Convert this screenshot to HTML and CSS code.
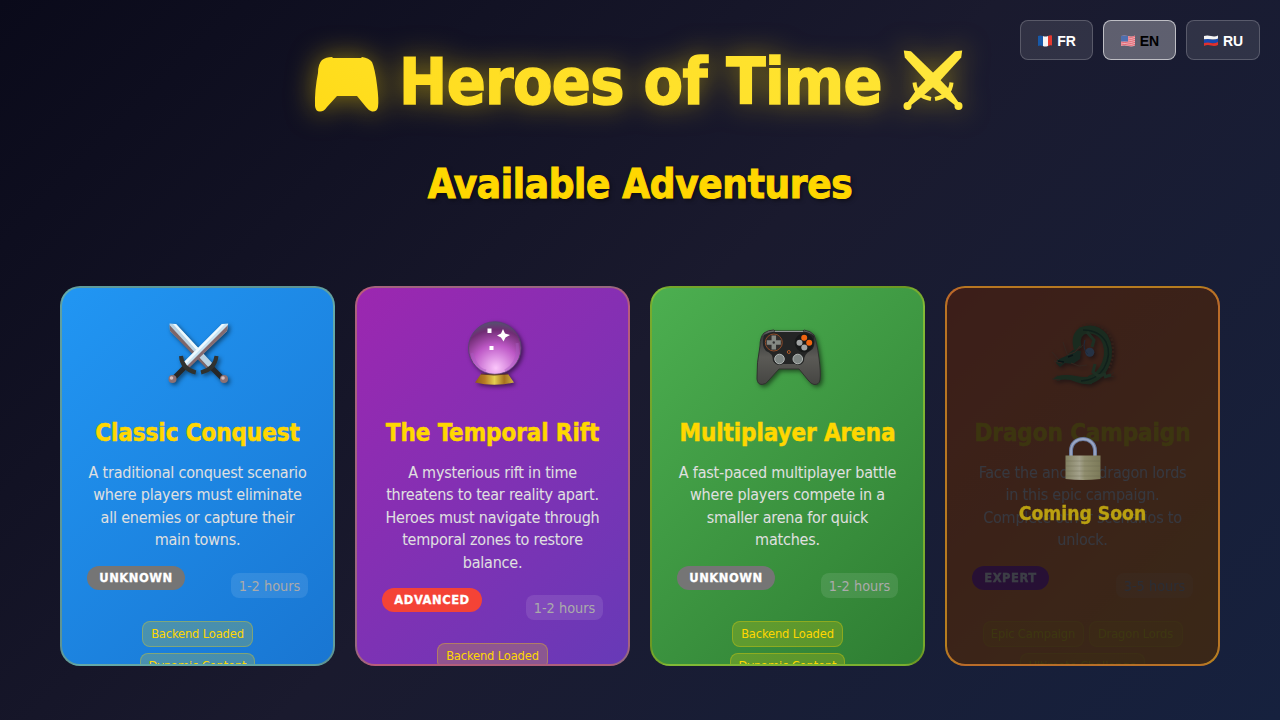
FILE: index.html
```html
<!DOCTYPE html>
<html lang="en">
<head>
<meta charset="utf-8">
<title>Heroes of Time</title>
<link rel="stylesheet" href="styles.css">
</head>
<body>
<svg class="defs" width="0" height="0">
  <defs>
    <linearGradient id="gold" x1="0" y1="1" x2="1" y2="0"><stop offset="0" stop-color="#ffdb18"/><stop offset="1" stop-color="#ffdf22"/></linearGradient>
    <linearGradient id="pad" x1="0" y1="0" x2="0" y2="1"><stop offset="0" stop-color="#77797a"/><stop offset=".12" stop-color="#3a3b3b"/><stop offset=".5" stop-color="#5b5a56"/><stop offset="1" stop-color="#454542"/></linearGradient>
    <radialGradient id="ball" cx=".52" cy=".88" r=".88"><stop offset="0" stop-color="#fbc6fb"/><stop offset=".25" stop-color="#dc90e2"/><stop offset=".5" stop-color="#bd58c6"/><stop offset=".83" stop-color="#702c74"/><stop offset="1" stop-color="#54526f"/></radialGradient>
    <linearGradient id="brass" x1="0" y1="0" x2="1" y2="0"><stop offset="0" stop-color="#8c5a17"/><stop offset=".25" stop-color="#b77a25"/><stop offset=".5" stop-color="#e5cf50"/><stop offset=".75" stop-color="#a6701f"/><stop offset="1" stop-color="#d1b544"/></linearGradient>
    <linearGradient id="lockbody" x1="0" y1="0" x2="1" y2="0"><stop offset="0" stop-color="#b0aa74"/><stop offset=".4" stop-color="#e0dab0"/><stop offset=".55" stop-color="#c2bc84"/><stop offset="1" stop-color="#a8a268"/></linearGradient>
    <path id="padshape" d="M12 15Q16 12 22 12L23 13H51L52 12Q59 13 62 17Q65 24 67 40Q69 55 68 62Q67 67 62 66.500Q59 66 56 62L47 51H27L17 62Q14 66.500 10 66.500Q5.500 66.500 5 61Q4.500 45 8 28Q8 19 12 15Z"/>
  </defs>
</svg>

<nav class="languages">
  <button class="lang"><svg class="flag" viewBox="0 0 16 12"><path fill="#1859a8" d="M1 1Q3 0 6 1V11Q3 10 1 11Z"/><path fill="#f5f5f5" d="M6 1Q8 2 11 1V11Q8 12 6 11Z"/><path fill="#e5392f" d="M11 1Q13 0 15 .5V10.500Q13 10 11 11Z"/></svg>FR</button>
  <button class="lang active"><svg class="flag" viewBox="0 0 16 12"><path fill="#efb6bd" d="M1 1Q4 0 8 1T15 .5V10.500Q12 12 8 11T1 11Z"/><path fill="none" stroke="#e4606c" d="M1 2Q5 1 8 2T15 1.500M1 4Q5 3 8 4T15 3.500M1 6Q5 5 8 6T15 5.500M1 8Q5 7 8 8T15 7.500M1 10Q5 9 8 10T15 9.500"/><path fill="#4f6fae" d="M1 1Q4 0 8 1V6.500H1Z"/></svg>EN</button>
  <button class="lang"><svg class="flag" viewBox="0 0 16 12"><path fill="#f4f4f4" d="M1 1Q4 0 8 1T15 .5V4.500H1Z"/><path fill="#1748af" d="M1 4.500Q5 3.500 8 4.500T15 3.500V8H1Z"/><path fill="#df302d" d="M1 8Q5 7 8 8T15 7V10Q12 11.500 8 10.500T1 11Z"/></svg>RU</button>
</nav>

<header>
  <h1>
    <svg class="title-icon" viewBox="0 0 72 72"><use href="#padshape" fill="url(#gold)"/></svg>
    <span class="title-text">Heroes of Time</span>
    <svg class="title-icon" viewBox="0 0 72 72">
      <g fill="#ffe63a"><path d="M7.800 5.500L15 6.300L40.500 31L53 44L63 58L60 61L46 50L32 38L8.800 12.500Z"/><path d="M66.200 5.500L59 6.300L33.500 31L21 44L11 58L14 61L28 50L42 38L65.200 12.500Z"/><circle cx="11.500" cy="61" r="4"/><circle cx="62.500" cy="61" r="4"/></g>
      <path fill="none" stroke="#ffe63a" stroke-width="4" d="M18.500 37.500Q19.500 51 35 54M55.500 37.500Q54.500 51 39 54"/>
    </svg>
  </h1>
  <h2>Available Adventures</h2>
</header>

<main class="cards">
  <article class="card classic">
    <svg class="icon" viewBox="0 0 72 72">
      <path fill="#b9d2e3" d="M7.500 5.500L14 6L52 47L48 51L8 13Z"/><path fill="#7d6669" d="M7.500 7L48 51L46 52L8 13Z"/><path fill="#edf8fc" d="M11 6L14 6L40 34L37 35Z"/>
      <path fill="#c9e4f3" d="M66.200 5.500L60 6L20 46L25 51L65 13Z"/><path fill="#856b70" d="M66 7L65 13L26 51L24 49Z"/><path fill="#eef9ff" d="M60 6L63 6L24 46L21 45Z"/>
      <path fill="none" stroke="#262728" stroke-width="5" d="M24 48L13 59M48 48L60 60"/>
      <path fill="none" stroke="#30322f" stroke-width="4" d="M19 38Q20 51 33.800 54.500M54.500 38Q53 51 39 54.500"/>
      <circle cx="10.500" cy="61" r="4" fill="#8c7073"/><circle cx="62" cy="61" r="4" fill="#8c7073"/><circle cx="9.500" cy="60" r="1.800" fill="#d3bfc1"/><circle cx="61" cy="60" r="1.800" fill="#d3bfc1"/>
    </svg>
    <h3>Classic Conquest</h3>
    <p>A traditional conquest scenario<br>where players must eliminate<br>all enemies or capture their<br>main towns.</p>
    <div class="meta"><span class="badge unknown">UNKNOWN</span><span class="duration">1-2 hours</span></div>
    <div class="tags"><span class="tag w111">Backend Loaded</span><span class="tag w115">Dynamic Content</span></div>
  </article>

  <article class="card rift">
    <svg class="icon" viewBox="0 0 72 72">
      <circle cx="37.800" cy="30" r="26.300" fill="url(#ball)" stroke="#56466d" stroke-width=".8"/>
      <path fill="none" stroke="#a95bc0" stroke-width="3" opacity=".45" d="M15 35Q19 51 29 53M60 25Q63 45 48 53"/>
      <path fill="#fff" d="M30.500 10.500H34.500V15H30.500ZM46 11L48 15.500L53 17L48.500 19.500L46.500 23.500L44 19.500L40 17.500L44 15.500ZM32.500 28H36.500V32H32.500Z"/>
      <path fill="url(#brass)" d="M24 56Q37 57.500 51 56L57 64.500Q37 69 18 64.500Z"/><path fill="none" stroke="#5d3929" d="M24 56Q37 58 51 56"/>
    </svg>
    <h3>The Temporal Rift</h3>
    <p>A mysterious rift in time<br>threatens to tear reality apart.<br>Heroes must navigate through<br>temporal zones to restore<br>balance.</p>
    <div class="meta"><span class="badge advanced">ADVANCED</span><span class="duration">1-2 hours</span></div>
    <div class="tags"><span class="tag w111">Backend Loaded</span></div>
  </article>

  <article class="card arena">
    <svg class="icon" viewBox="0 0 72 72">
      <use href="#padshape" fill="url(#pad)" stroke="#30322f"/>
      <path fill="#242525" d="M12 17Q20 12 28 14H46Q55 12 62 18Q64 31 58 33Q52 36 52 43Q49 49 43 46H31Q25 49 21 43Q21 35 14 33Q9 28 12 17Z"/>
      <path fill="none" stroke="#909596" d="M23 13.500H51"/>
      <circle cx="21.800" cy="24.500" r="8.500" fill="#302e2c" stroke="#8d4a28"/><path stroke="#858983" stroke-width="4.500" d="M21.800 17.500V31.500M14.800 24.500H28.800"/><circle cx="21.800" cy="24.500" r="1.200" fill="#333"/>
      <circle cx="52.200" cy="24.700" r="9.500" fill="#171919"/><circle cx="52.200" cy="19.800" r="3" fill="#f06410"/><circle cx="57.200" cy="24.800" r="3" fill="#f06410"/><circle cx="47.500" cy="24.800" r="3" fill="#a2a5a5"/><circle cx="52.300" cy="29.600" r="3" fill="#a2a5a5"/>
      <circle cx="27.500" cy="41" r="4.800" fill="#7e8583" stroke="#b1b6b4"/><circle cx="45.800" cy="41" r="4.800" fill="#7e8583" stroke="#b1b6b4"/><circle cx="36.800" cy="34" r="1.500" fill="none" stroke="#b35b29"/>
    </svg>
    <h3>Multiplayer Arena</h3>
    <p>A fast-paced multiplayer battle<br>where players compete in a<br>smaller arena for quick<br>matches.</p>
    <div class="meta"><span class="badge unknown">UNKNOWN</span><span class="duration">1-2 hours</span></div>
    <div class="tags"><span class="tag w111">Backend Loaded</span><span class="tag w115">Dynamic Content</span></div>
  </article>

  <article class="card dragon">
    <svg class="icon" viewBox="0 0 72 72">
      <path fill="none" stroke="#d8742a" stroke-width="2.500" stroke-dasharray="2 2" d="M27 21Q29 7 42 6Q59 6 65 22Q68 38 62 50"/>
      <path fill="none" stroke="#5aa84e" stroke-width="8" d="M31 31Q27 19 35 13Q48 8 57 19Q64 31 59 45Q54 59 42 62"/>
      <path fill="#5aa84e" d="M45 58L45 66Q37 67 29 64Q20 60 11 62.500L5 61L9 58.500Q18 56 29 58Q38 60 45 58Z"/>
      <path fill="none" stroke="#2d6b35" stroke-width="1.500" d="M36 12Q52 12 59 24Q65 36 57 50Q50 62 34 63"/>
      <path fill="none" stroke="#6cba5e" stroke-width="3" d="M40 14L47 22L45 29M48 46L46 54L51 58L59 56M57 59L64 57"/>
      <path fill="#4c9450" d="M34 33L26 32L19 38L10 42L9 45L13 49L18 45L26 46L33 41Z"/><path fill="none" stroke="#d88c4c" stroke-width="1" d="M33 28L28 34L20 37M20 36L16 24M12 42L5 34M15 45L7 43M24 45L32 48L40 47M29 33L36 27"/>
      <path stroke="#123a24" stroke-width="1.500" d="M11 43L17 44M21 39L26 37"/>
      <circle cx="42.800" cy="34.300" r="4.500" fill="#90c9ff"/><path fill="none" stroke="#6ba4da" d="M38 22Q35 31 41 36"/><path stroke="#bd8045" d="M6 61L11 57M6 61L13 62M64 57L67 54M64 58L67 59"/>
    </svg>
    <h3>Dragon Campaign</h3>
    <p>Face the ancient dragon lords<br>in this epic campaign.<br>Complete other scenarios to<br>unlock.</p>
    <div class="meta"><span class="badge expert">EXPERT</span><span class="duration">3-5 hours</span></div>
    <div class="tags"><span class="tag w101">Epic Campaign</span><span class="tag w94">Dragon Lords</span><span class="tag w125">Ultimate Challenge</span></div>
    <div class="overlay">
      <svg class="lock" viewBox="0 0 36 44"><path fill="none" stroke="#8fa3cc" stroke-width="4" d="M6 21V14C6 -2 30 -2 30 14V21"/><path fill="none" stroke="#d3e2ff" stroke-width="1.800" d="M6 20V14C6 -2 30 -2 30 14V20"/><path fill="url(#lockbody)" d="M.5 18.500H35.500V42Q18 44 .5 42Z"/><path stroke="#817d52" opacity=".3" d="M1 24H35M1 29H35M1 34H35M1 39H35"/></svg>
      <strong>Coming Soon</strong>
    </div>
  </article>
</main>
</body>
</html>
```
FILE: styles.css
```css
* { box-sizing: border-box; margin: 0; padding: 0; }
body {
  width: 1280px;
  height: 720px;
  overflow: hidden;
  background: linear-gradient(135deg, #0a0a1a 0%, #1a1a2e 50%, #16213e 100%);
  font-family: "DejaVu Sans Condensed", "DejaVu Sans", sans-serif;
  font-stretch: condensed;
  color: #e0e0e0;
}
.defs { position: absolute; }
.languages { position: absolute; top: 20px; right: 20px; display: flex; gap: 10px; }
.lang {
  width: 73px;
  height: 40px;
  display: flex;
  align-items: center;
  justify-content: center;
  gap: 4px;
  padding-top: 1px;
  border: 1px solid rgba(255,255,255,.2);
  border-radius: 8px;
  background: rgba(255,255,255,.1);
  color: #fff;
  font: bold 14px "Liberation Sans", Arial, sans-serif;
}
.lang:last-child { width: 74px; }
.lang.active { background: rgba(255,255,255,.3); border-color: rgba(255,255,255,.6); color: #000; }
.flag { width: 16px; height: 12px; }
header { height: 286px; padding-top: 45px; text-align: center; }
h1 {
  display: flex;
  justify-content: center;
  height: 74px;
  margin-right: 2px;
  font-size: 64px;
  line-height: 74px;
  letter-spacing: -.6px;
  filter: drop-shadow(0 0 14px rgba(255,215,0,.5));
}
.title-icon { width: 72px; height: 72px; flex: none; }
.title-text {
  width: 514px;
  padding-left: 3px;
  white-space: nowrap;
  background: linear-gradient(90deg, #ffdd20, #ffe432);
  background-clip: text;
  color: transparent;
  -webkit-text-stroke: 1.5px transparent;
}
h2 {
  margin-top: 41px;
  color: #ffd700;
  font-size: 40px;
  line-height: 48px;
  letter-spacing: -.35px;
  -webkit-text-stroke: 1px #ffd700;
  text-shadow: 2px 2px 4px rgba(0,0,0,.5);
}
.cards { display: grid; grid-template-columns: repeat(4, 275px); gap: 20px; padding: 0 60px; }
.card {
  position: relative;
  height: 380px;
  overflow: hidden;
  padding: 30px 25px;
  border: 2px solid rgba(255,215,0,.3);
  border-radius: 20px;
  text-align: center;
}
.classic { background: linear-gradient(135deg, #2196f3, #1976d2); }
.rift { background: linear-gradient(135deg, #9c27b0, #673ab7); }
.arena { background: linear-gradient(135deg, #4caf50, #2e7d32); }
.dragon { background: linear-gradient(135deg, #ff6b35, #f7931e); opacity: .7; }
.icon { display: block; width: 72px; height: 72px; margin: 0 auto; filter: drop-shadow(2px 2px 2px rgba(0,0,0,.5)); }
h3 {
  margin-top: 27px;
  color: #ffd700;
  font-size: 24px;
  line-height: 32px;
  letter-spacing: -.1px;
  white-space: nowrap;
  -webkit-text-stroke: .5px #ffd700;
}
p { margin-top: 13px; font-size: 16px; line-height: 22.400px; letter-spacing: -.21px; white-space: nowrap; color: #e0e0e0; }
.meta { display: flex; align-items: flex-start; justify-content: space-between; margin-top: 14px; height: 32px; }
.badge {
  height: 24px;
  border-radius: 12px;
  color: #fff;
  font-size: 12.800px;
  font-weight: bold;
  line-height: 24px;
  letter-spacing: .55px;
  -webkit-text-stroke: .3px #fff;
}
.unknown { width: 98px; background: #757575; }
.advanced { width: 100px; background: #f44336; }
.expert { width: 77px; background: #9c27b0; }
.duration {
  width: 77px;
  height: 25px;
  margin-top: 7px;
  border-radius: 8px;
  background: rgba(255,255,255,.1);
  color: #aaa;
  font-size: 14.400px;
  line-height: 26px;
}
.tags { display: flex; flex-wrap: wrap; justify-content: center; gap: 6px 5px; margin-top: 23px; }
.tag {
  height: 26px;
  border: 1px solid rgba(255,215,0,.3);
  border-radius: 8px;
  background: rgba(255,215,0,.2);
  color: #ffd700;
  font-size: 12.800px;
  line-height: 24px;
  letter-spacing: -.15px;
  white-space: nowrap;
}
.w111 { width: 111px; }
.classic .w111, .arena .w111 { margin: 0 50px; }
.w115 { width: 115px; }
.w101 { width: 101px; }
.w94 { width: 94px; }
.w125 { width: 125px; }
.overlay {
  position: absolute;
  inset: 0;
  display: flex;
  flex-direction: column;
  align-items: center;
  padding-top: 149px;
  border-radius: 18px;
  background: rgba(0,0,0,.7);
}
.lock { width: 36px; height: 44px; }
.overlay strong { margin-top: 21px; color: #ffd700; font-size: 19.200px; line-height: 24px; -webkit-text-stroke: .3px #ffd700; }
```
